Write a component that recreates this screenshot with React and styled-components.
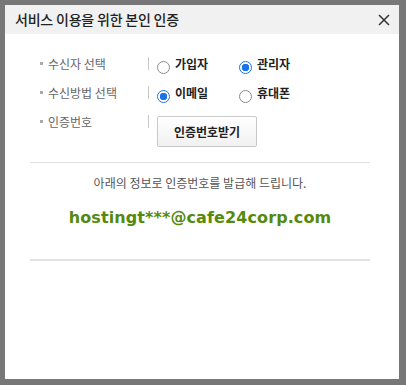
import React, { useState } from 'react';
import styled, { createGlobalStyle } from 'styled-components';

const GlobalStyle = createGlobalStyle`
  html, body {
    margin: 0;
    padding: 0;
    height: 100%;
    background: #777777;
  }
  body {
    font-family: "Noto Sans CJK KR", "Noto Sans", sans-serif;
  }
  * { box-sizing: border-box; }
`;

const Dialog = styled.div`
  width: 394px;
  height: 374px;
  margin: 5px 0 0 5px;
  background: #ffffff;
  display: flex;
  flex-direction: column;
`;

const Header = styled.div`
  height: 29px;
  background: #f1f1f1;
  display: flex;
  align-items: center;
  justify-content: space-between;
  padding: 0 8px 0 10px;
`;

const Title = styled.h1`
  margin: 0;
  font-size: 14px;
  font-weight: 500;
  color: #222222;
  line-height: 29px;
  letter-spacing: -0.2px;
`;

const CloseBtn = styled.button`
  border: 0;
  background: none;
  padding: 0;
  width: 14px;
  height: 14px;
  display: flex;
  align-items: center;
  justify-content: center;
  cursor: pointer;
`;

const Form = styled.div`
  padding: 15px 0 0 35px;
  display: flex;
  flex-direction: column;
`;

const Row = styled.div`
  display: flex;
  align-items: flex-start;
  min-height: 29px;
`;

const Label = styled.div`
  width: 108px;
  display: flex;
  align-items: center;
  height: 29px;
  font-size: 12px;
  color: #666666;

  &::before {
    content: "";
    width: 3px;
    height: 3px;
    background: #aaaaaa;
    margin-right: 5px;
  }
`;

const Value = styled.div`
  display: flex;
  align-items: flex-start;
  padding-left: 9px;
  position: relative;

  &::before {
    content: "";
    position: absolute;
    left: 0;
    top: 8px;
    width: 1px;
    height: 13px;
    background: #c8c8c8;
  }
`;

const Option = styled.label`
  width: 82px;
  height: 29px;
  display: flex;
  align-items: center;
  font-size: 12px;
  font-weight: 600;
  color: #222222;
  cursor: pointer;
`;

const Radio = styled.input.attrs({ type: 'radio' })`
  appearance: none;
  margin: 8px 5px 0 0;
  width: 13px;
  height: 13px;
  border-radius: 50%;
  border: 1px solid #8a8a8a;
  background: #ffffff;
  flex: none;

  &:checked {
    border-color: #1a73e8;
    background: radial-gradient(circle, #1a73e8 0 3.5px, #ffffff 4px);
  }
`;

const Button = styled.button`
  margin-top: 9px;
  width: 100px;
  height: 31px;
  border: 1px solid #c9c9c9;
  border-radius: 2px;
  background: linear-gradient(#ffffff, #f1f1f1);
  font-family: inherit;
  font-size: 12px;
  font-weight: 700;
  color: #222222;
  cursor: pointer;
`;

const Divider = styled.hr`
  margin: ${p => p.$top}px 0 0 25px;
  width: 340px;
  border: 0;
  height: ${p => p.$thick}px;
  background: #e2e2e2;
`;

const Notice = styled.p`
  margin: 11px 0 0;
  text-align: center;
  font-size: 12px;
  line-height: 18px;
  color: #555555;
  padding-right: 4px;
`;

const Email = styled.p`
  margin: 14px 0 0;
  text-align: center;
  font-family: "DejaVu Sans", Verdana, sans-serif;
  font-size: 16px;
  font-weight: 700;
  line-height: 24px;
  letter-spacing: 0.1px;
  color: #558a0c;
  padding-right: 4px;
`;

const CloseIcon = () => (
  <svg width="12" height="12" viewBox="0 0 12 12">
    <path d="M1 1 L11 11 M11 1 L1 11" stroke="#333" strokeWidth="1.5" fill="none" />
  </svg>
);

export default function App() {
  const [target, setTarget] = useState('admin');
  const [method, setMethod] = useState('email');

  return (
    <>
      <GlobalStyle />
      <Dialog>
        <Header>
          <Title>서비스 이용을 위한 본인 인증</Title>
          <CloseBtn aria-label="닫기"><CloseIcon /></CloseBtn>
        </Header>
        <Form>
          <Row>
            <Label>수신자 선택</Label>
            <Value>
              <Option>
                <Radio name="target" checked={target === 'member'} onChange={() => setTarget('member')} />
                가입자
              </Option>
              <Option>
                <Radio name="target" checked={target === 'admin'} onChange={() => setTarget('admin')} />
                관리자
              </Option>
            </Value>
          </Row>
          <Row>
            <Label>수신방법 선택</Label>
            <Value>
              <Option>
                <Radio name="method" checked={method === 'email'} onChange={() => setMethod('email')} />
                이메일
              </Option>
              <Option>
                <Radio name="method" checked={method === 'phone'} onChange={() => setMethod('phone')} />
                휴대폰
              </Option>
            </Value>
          </Row>
          <Row>
            <Label>인증번호</Label>
            <Value>
              <Button>인증번호받기</Button>
            </Value>
          </Row>
        </Form>
        <Divider $top={15} $thick={1} />
        <Notice>아래의 정보로 인증번호를 발급해 드립니다.</Notice>
        <Email>hostingt***@cafe24corp.com</Email>
        <Divider $top={29} $thick={2} />
      </Dialog>
    </>
  );
}
